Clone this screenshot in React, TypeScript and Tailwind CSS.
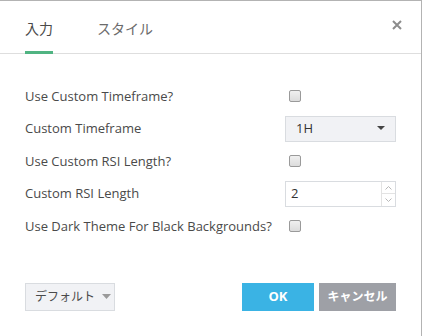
import React from "react";

const font = { fontFamily: '"Open Sans", "Noto Sans CJK JP", sans-serif' };

function Checkbox() {
  return (
    <span className="ml-1 inline-block h-3 w-3 rounded-[2px] border border-[#9a9a9a] bg-gradient-to-b from-[#f0f0f0] to-[#dcdcdc]" />
  );
}

function Row({ label, children }: { label: string; children: React.ReactNode }) {
  return (
    <div className="flex h-[32.5px] items-center">
      <div className="w-[260px] shrink-0 text-[13px] text-[#4a4a4a]">{label}</div>
      <div className="flex items-center">{children}</div>
    </div>
  );
}

export default function App() {
  return (
    <div
      className="h-[336px] w-[422px] border-t border-r border-[#b3b3b3] bg-white"
      style={font}
    >
      {/* Tabs */}
      <div className="flex h-[53px] items-end border-b border-[#dedede] pl-[25px] pr-[19px]">
        <div className="flex h-full flex-1 items-end gap-[44px]">
          <div className="-mb-px flex h-full flex-col justify-center border-b-[3px] border-[#50b482] pt-[3px] text-[14px] text-[#4a4a4a]">
            入力
          </div>
          <div className="flex h-full flex-col justify-center pt-[3px] text-[14px] text-[#6b6b6b]">
            スタイル
          </div>
        </div>
        <div className="flex h-full items-center pb-[4px]">
          <svg width="10" height="10" viewBox="0 0 10 10">
            <path d="M1 1 L9 9 M9 1 L1 9" stroke="#8c8c8c" strokeWidth="2" />
          </svg>
        </div>
      </div>

      {/* Fields */}
      <div className="px-[25px] pt-[26px]">
        <Row label="Use Custom Timeframe?">
          <Checkbox />
        </Row>
        <Row label="Custom Timeframe">
          <div className="flex h-[26px] w-[111px] items-center justify-between border border-[#d9dce0] bg-[#f1f2f5] pl-[10px] pr-[10px] text-[13px] text-[#333]">
            <span>1H</span>
            <svg width="8" height="5" viewBox="0 0 8 5">
              <path d="M0 0 L8 0 L4 4 Z" fill="#444" />
            </svg>
          </div>
        </Row>
        <Row label="Use Custom RSI Length?">
          <Checkbox />
        </Row>
        <Row label="Custom RSI Length">
          <div className="flex h-[26px] w-[111px] items-stretch border border-[#d9dce0] bg-white text-[13px] text-[#333]">
            <span className="flex flex-1 items-center pl-[5px]">2</span>
            <div className="flex w-[14px] flex-col border-l border-[#e3e3e3]">
              <div className="flex flex-1 items-center justify-center border-b border-[#e3e3e3]">
                <svg width="7" height="4" viewBox="0 0 7 4">
                  <path d="M0.5 3.5 L3.5 0.5 L6.5 3.5" stroke="#b8b8b8" fill="none" />
                </svg>
              </div>
              <div className="flex flex-1 items-center justify-center">
                <svg width="7" height="4" viewBox="0 0 7 4">
                  <path d="M0.5 0.5 L3.5 3.5 L6.5 0.5" stroke="#b8b8b8" fill="none" />
                </svg>
              </div>
            </div>
          </div>
        </Row>
        <Row label="Use Dark Theme For Black Backgrounds?">
          <Checkbox />
        </Row>
      </div>

      {/* Footer */}
      <div className="mt-[40px] flex items-center px-[25px]">
        <div className="flex h-[28px] w-[90px] items-center gap-[7px] whitespace-nowrap border border-[#d9dce0] bg-[#f1f2f5] pl-[9px] text-[12px] text-[#4a4a4a]">
          <span>デフォルト</span>
          <svg width="9" height="5" viewBox="0 0 9 5">
            <path d="M0 0 L9 0 L4.5 5 Z" fill="#9a9a9a" />
          </svg>
        </div>
        <div className="flex-1" />
        <div className="flex h-[28px] w-[72px] items-center justify-center bg-[#3ab3e4] text-[13px] font-bold text-white">
          OK
        </div>
        <div className="ml-[5px] flex h-[28px] w-[77px] items-center justify-center whitespace-nowrap bg-[#9ea0a6] text-[12px] font-bold text-white">
          キャンセル
        </div>
      </div>
    </div>
  );
}
